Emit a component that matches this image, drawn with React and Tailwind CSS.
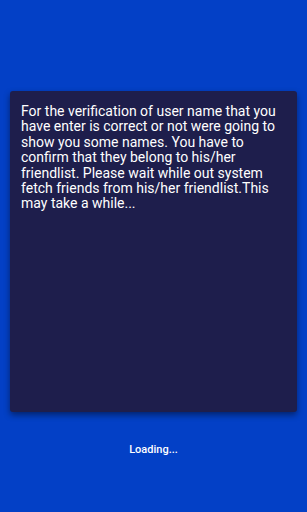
import React from 'react'

export default function App() {
  return (
    <div
      className="w-[307px] h-[512px] bg-[#0340c6] flex flex-col pt-[91px]"
      style={{ fontFamily: 'Roboto, "Noto Sans", sans-serif' }}
    >
      <div className="mx-[10px] h-[321px] bg-[#1e1e4c] rounded-[3px] shadow-[0_3px_6px_rgba(0,0,0,0.45)] pl-[11px] pr-[12px] pt-[13px]">
        <p className="text-white text-[14px] leading-[15.4px]">
          For the verification of user name that you have enter is correct or not were going to
          show you some names. You have to confirm that they belong to his/her friendlist. Please
          wait while out system fetch friends from his/her friendlist.This may take a while...
        </p>
      </div>
      <div className="mt-[30px] text-center text-white text-[11px] font-medium">Loading...</div>
    </div>
  )
}
